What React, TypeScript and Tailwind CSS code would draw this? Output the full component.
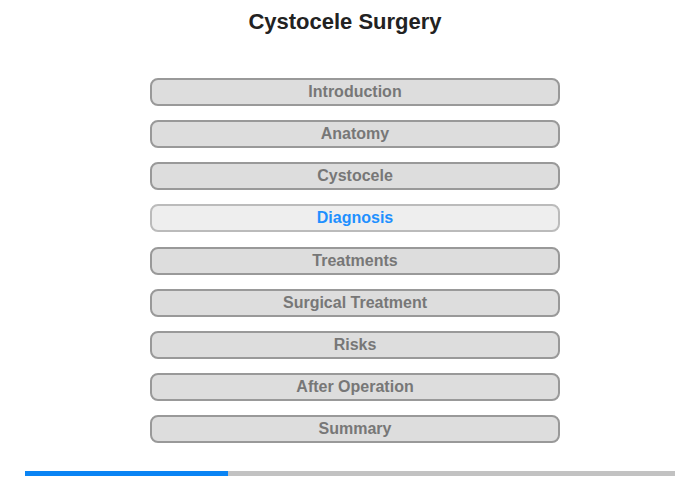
import React from 'react';

const chapters = [
  'Introduction',
  'Anatomy',
  'Cystocele',
  'Diagnosis',
  'Treatments',
  'Surgical Treatment',
  'Risks',
  'After Operation',
  'Summary',
];

const App: React.FC = () => {
  const active = 'Diagnosis';

  return (
    <div className="w-[700px] h-[480px] bg-white font-['Liberation_Sans',Arial,sans-serif] flex flex-col items-center">
      <h1 className="mt-[9px] mr-[10px] text-[22px] leading-[26px] font-bold text-[#222]">Cystocele Surgery</h1>

      <div className="mt-[43px] ml-[10px] flex flex-col gap-[14.125px]">
        {chapters.map(name => {
          const isActive = name === active;
          return (
            <div
              key={name}
              className={
                isActive
                  ? 'w-[410px] h-[28px] rounded-[8px] border-2 border-[#bbb] bg-[#eee] flex items-center justify-center text-[16px] font-bold text-[#1e90ff]'
                  : 'w-[410px] h-[28px] rounded-[8px] border-2 border-[#999] bg-[#ddd] flex items-center justify-center text-[16px] font-bold text-[#777]'
              }
            >
              {name}
            </div>
          );
        })}
      </div>

      <div className="mt-[28px] w-[650px] h-[5px] bg-[#c2c2c2] flex">
        <div className="h-full bg-[#0a84f4]" style={{ width: `${(203 / 650) * 100}%` }} />
      </div>
    </div>
  );
};

export default App;
